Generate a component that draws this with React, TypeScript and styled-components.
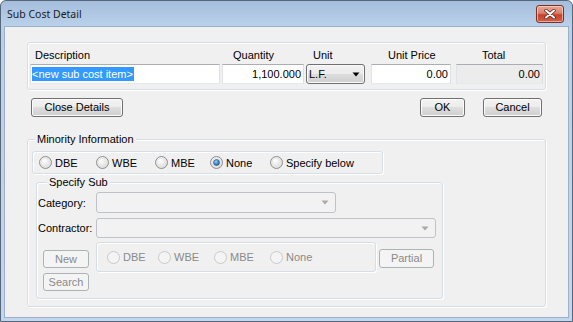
import React from 'react';
import styled, {createGlobalStyle, css} from "styled-components";

const GlobalStyle = createGlobalStyle`
  html, body {
    margin: 0;
    padding: 0;
    background: #ffffff;
  }
  #root {
    width: 573px;
    height: 322px;
  }
`;

const uiFont = `"Liberation Sans", Arial, sans-serif`;

const RadioDot = ({checked, disabled}: { checked?: boolean; disabled?: boolean }) => (
    <svg width="13" height="13" viewBox="0 0 13 13">
        <defs>
            <radialGradient id="rfill" cx="40%" cy="35%" r="70%">
                <stop offset="0%" stopColor="#ffffff"/>
                <stop offset="100%" stopColor="#d6d6d6"/>
            </radialGradient>
            <radialGradient id="rdot" cx="40%" cy="35%" r="70%">
                <stop offset="0%" stopColor="#8fd0f5"/>
                <stop offset="100%" stopColor="#1b5b9c"/>
            </radialGradient>
        </defs>
        <circle cx="6.5" cy="6.5" r="6" fill={disabled ? '#f4f4f4' : 'url(#rfill)'}
                stroke={disabled ? '#c8c8c8' : '#8e8f8f'}/>
        {!disabled && <circle cx="6.5" cy="6.5" r="4.5" fill="none" stroke="#e6e6e6" strokeWidth="1"/>}
        {checked && <circle cx="6.5" cy="6.5" r="3" fill="url(#rdot)" stroke="#1c4f86" strokeWidth="0.6"/>}
    </svg>
);

const CloseGlyph = () => (
    <svg width="12" height="10" viewBox="0 0 12 10">
        <path d="M2 1.5 L10 8.5 M10 1.5 L2 8.5" stroke="#5a2116" strokeWidth="3.4" strokeLinecap="round"/>
        <path d="M2 1.5 L10 8.5 M10 1.5 L2 8.5" stroke="#ffffff" strokeWidth="2" strokeLinecap="round"/>
    </svg>
);

const ComboArrow = ({disabled}: { disabled?: boolean }) => (
    <svg width="8" height="5" viewBox="0 0 8 5">
        <path d="M0.5 0.5 L7.5 0.5 L4 4.5 Z" fill={disabled ? '#a9a9a9' : '#000000'}/>
    </svg>
);

const minorityOptions = ['DBE', 'WBE', 'MBE', 'None', 'Specify below'];
const minorityWidths = [57, 59, 55, 60, 0];
const subOptions = ['DBE', 'WBE', 'MBE', 'None'];
const subWidths = [51, 56, 56, 0];

const App = () => {
    return (
        <>
            <GlobalStyle/>
            <Window>
                <TitleBar>
                    <Title>Sub Cost Detail</Title>
                    <CloseButton><CloseGlyph/></CloseButton>
                </TitleBar>
                <Client>
                    <TopGroup>
                        <FieldRow>
                            <Column $w={190} $ml={0}>
                                <ColLabel $indent={5}>Description</ColLabel>
                                <TextBox $align="left">
                                    <Selected>&lt;new sub cost item&gt;</Selected>
                                </TextBox>
                            </Column>
                            <Column $w={82} $ml={2}>
                                <ColLabel $indent={11}>Quantity</ColLabel>
                                <TextBox $align="right">1,100.000</TextBox>
                            </Column>
                            <Column $w={59} $ml={2}>
                                <ColLabel $indent={7}>Unit</ColLabel>
                                <UnitCombo>
                                    <span>L.F.</span>
                                    <ComboArrow/>
                                </UnitCombo>
                            </Column>
                            <Column $w={80} $ml={6}>
                                <ColLabel $indent={17}>Unit Price</ColLabel>
                                <TextBox $align="right">0.00</TextBox>
                            </Column>
                            <Column $w={87} $ml={5}>
                                <ColLabel $indent={26}>Total</ColLabel>
                                <TextBox $align="right" $readOnly>0.00</TextBox>
                            </Column>
                        </FieldRow>
                    </TopGroup>

                    <ButtonRow>
                        <Button $w={92}>Close Details</Button>
                        <Button $w={45} style={{marginLeft: 'auto'}}>OK</Button>
                        <Button $w={59}>Cancel</Button>
                    </ButtonRow>

                    <MinorityGroup>
                        <Caption $left={7}>Minority Information</Caption>
                        <RadioPanel $w={351} $h={23} $pl={6}>
                            {minorityOptions.map((opt, i) => (
                                <RadioItem key={opt} $w={minorityWidths[i]}>
                                    <RadioDot checked={opt === 'None'}/>
                                    <span>{opt}</span>
                                </RadioItem>
                            ))}
                        </RadioPanel>

                        <SpecifyGroup>
                            <Caption $left={10}>Specify Sub</Caption>
                            <FormRow>
                                <RowLabel>Category:</RowLabel>
                                <Combo $w={240} $h={21}><ComboArrow disabled/></Combo>
                            </FormRow>
                            <FormRow $mt={5}>
                                <RowLabel>Contractor:</RowLabel>
                                <Combo $w={340} $h={20}><ComboArrow disabled/></Combo>
                            </FormRow>
                            <BottomRow>
                                <SideButtons>
                                    <Button $w={46} $h={18} disabled>New</Button>
                                    <Button $w={46} $h={18} disabled>Search</Button>
                                </SideButtons>
                                <RadioPanel $w={280} $h={30} $pl={10} $ml={7}>
                                    {subOptions.map((opt, i) => (
                                        <RadioItem key={opt} $w={subWidths[i]} $disabled>
                                            <RadioDot disabled/>
                                            <span>{opt}</span>
                                        </RadioItem>
                                    ))}
                                </RadioPanel>
                                <PartialButton $w={55} disabled>Partial</PartialButton>
                            </BottomRow>
                        </SpecifyGroup>
                    </MinorityGroup>
                </Client>
            </Window>
        </>
    );
};

const Window = styled.div`
  width: 573px;
  height: 322px;
  box-sizing: border-box;
  border: 1px solid #55667d;
  border-radius: 6px 6px 0 0;
  background: linear-gradient(#a5bedc 0px, #b9d0ea 24px, #c2d6ee 100%);
  display: flex;
  flex-direction: column;
  padding: 0 3px 3px;
  font-family: ${uiFont};
  font-size: 11px;
  color: #000;
`;

const TitleBar = styled.div`
  height: 25px;
  display: flex;
  align-items: center;
  justify-content: space-between;
  padding: 0 5px 0 3px;
`;

const Title = styled.div`
  font-family: "Noto Sans", "Open Sans", sans-serif;
  font-size: 10.5px;
  color: #1b1b1b;
`;

const CloseButton = styled.div`
  width: 28px;
  height: 18px;
  margin-top: 1px;
  box-sizing: border-box;
  border: 1px solid #7a3226;
  border-radius: 3px;
  background: linear-gradient(#e8a896 0%, #d7826c 45%, #c7432c 55%, #d0604a 100%);
  box-shadow: inset 0 0 0 1px rgba(255, 220, 210, 0.6);
  display: flex;
  align-items: center;
  justify-content: center;
`;

const Client = styled.div`
  flex: 1;
  background: #f0f0f0;
  border: 1px solid #9cb0c8;
  padding: 15px 0 0 22px;
  box-sizing: border-box;
`;

const groupBorder = css`
  box-sizing: border-box;
  border: 1px solid #d5dfe5;
  border-radius: 3px;
  box-shadow: inset 1px 1px 0 #ffffff, 1px 1px 0 #ffffff;
`;

const TopGroup = styled.div`
  ${groupBorder};
  width: 519px;
  height: 48px;
  padding: 5px 0 0 2px;
`;

const FieldRow = styled.div`
  display: flex;
`;

const Column = styled.div<{ $w: number; $ml: number }>`
  display: flex;
  flex-direction: column;
  width: ${p => p.$w}px;
  margin-left: ${p => p.$ml}px;
`;

const ColLabel = styled.div<{ $indent: number }>`
  height: 14px;
  line-height: 14px;
  margin-bottom: 2px;
  padding-left: ${p => p.$indent}px;
  white-space: nowrap;
`;

const TextBox = styled.div<{ $align: 'left' | 'right'; $readOnly?: boolean }>`
  height: 20px;
  box-sizing: border-box;
  border: 1px solid;
  border-color: #abadb3 #dbdfe6 #e3e9ef #e2e3ea;
  background: ${p => p.$readOnly ? '#ececec' : '#ffffff'};
  display: flex;
  align-items: center;
  justify-content: ${p => p.$align === 'right' ? 'flex-end' : 'flex-start'};
  padding: 0 2px 0 1px;
  white-space: nowrap;
  overflow: hidden;
`;

const Selected = styled.span`
  background: #3399ff;
  color: #ffffff;
  line-height: 14px;
  padding-right: 1px;
`;

const UnitCombo = styled.div`
  height: 20px;
  box-sizing: border-box;
  border: 1px solid #707070;
  border-radius: 3px;
  background: linear-gradient(#f2f2f2 0%, #ebebeb 50%, #dddddd 50%, #cfcfcf 100%);
  box-shadow: inset 0 0 0 1px #fbfbfb;
  display: flex;
  align-items: center;
  justify-content: space-between;
  padding: 0 4px 0 2px;
`;

const ButtonRow = styled.div`
  display: flex;
  gap: 18px;
  width: 511px;
  margin: 8px 0 0 4px;
`;

const Button = styled.button<{ $w: number; $h?: number }>`
  width: ${p => p.$w}px;
  height: ${p => p.$h ?? 19}px;
  box-sizing: border-box;
  padding: 0;
  border: 1px solid #707070;
  border-radius: 3px;
  background: linear-gradient(#f3f3f3 0%, #ececec 50%, #dedede 50%, #d0d0d0 100%);
  box-shadow: inset 0 0 0 1px #fcfcfc;
  font-family: ${uiFont};
  font-size: 11px;
  color: #000;
  line-height: 1;

  &:disabled {
    border-color: #adb2b5;
    background: #f4f4f4;
    box-shadow: none;
    color: #8a8a8a;
  }
`;

const PartialButton = styled(Button)`
  margin: 7px 0 0 3px;
`;

const MinorityGroup = styled.div`
  ${groupBorder};
  position: relative;
  width: 519px;
  height: 168px;
  margin-top: 22px;
  padding: 11px 0 0 4px;
`;

const Caption = styled.div<{ $left: number }>`
  position: absolute;
  top: -8px;
  left: ${p => p.$left}px;
  padding: 0 2px;
  background: #f0f0f0;
  line-height: 14px;
  white-space: nowrap;
`;

const RadioPanel = styled.div<{ $w: number; $h: number; $pl: number; $ml?: number }>`
  ${groupBorder};
  width: ${p => p.$w}px;
  height: ${p => p.$h}px;
  margin-left: ${p => p.$ml ?? 0}px;
  padding-left: ${p => p.$pl}px;
  display: flex;
  align-items: center;
`;

const RadioItem = styled.div<{ $w: number; $disabled?: boolean }>`
  display: flex;
  align-items: center;
  gap: 3px;
  width: ${p => p.$w ? `${p.$w}px` : 'auto'};
  flex-shrink: 0;
  color: ${p => p.$disabled ? '#8a8a8a' : '#000'};
  white-space: nowrap;

  svg {
    flex-shrink: 0;
  }
`;

const SpecifyGroup = styled.div`
  ${groupBorder};
  position: relative;
  width: 407px;
  height: 117px;
  margin: 8px 0 0 4px;
  padding: 9px 0 0 1px;
`;

const FormRow = styled.div<{ $mt?: number }>`
  display: flex;
  align-items: center;
  margin-top: ${p => p.$mt ?? 0}px;
`;

const RowLabel = styled.div`
  width: 58px;
  white-space: nowrap;
`;

const Combo = styled.div<{ $w: number; $h: number }>`
  width: ${p => p.$w}px;
  height: ${p => p.$h}px;
  box-sizing: border-box;
  border: 1px solid #bfc3c7;
  border-radius: 3px;
  background: #f2f2f2;
  display: flex;
  align-items: center;
  justify-content: flex-end;
  padding-right: 6px;
`;

const BottomRow = styled.div`
  display: flex;
  align-items: flex-start;
  margin-top: 4px;
`;

const SideButtons = styled.div`
  display: flex;
  flex-direction: column;
  gap: 5px;
  margin: 8px 0 0 5px;
`;

export default App;
